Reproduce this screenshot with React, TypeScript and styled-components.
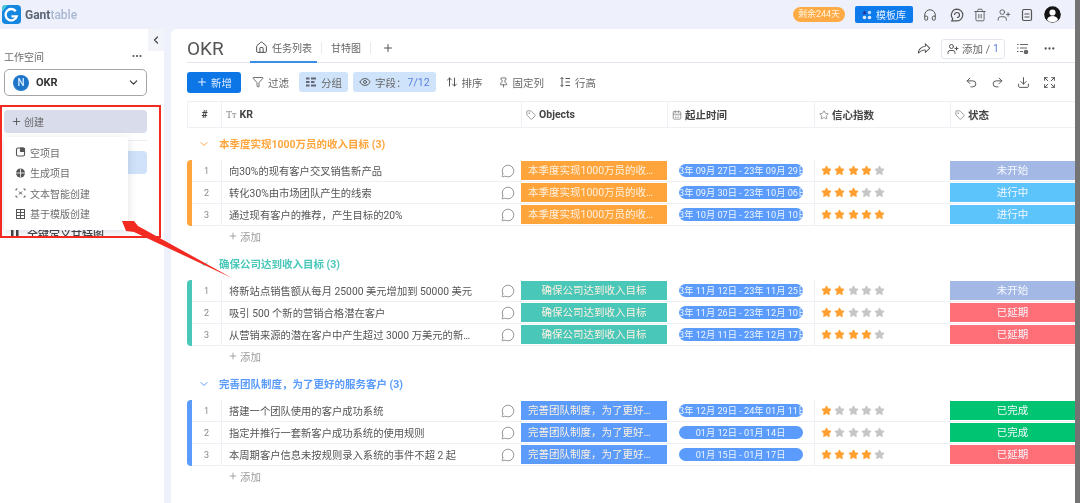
import React from "react";
import styled, { createGlobalStyle } from "styled-components";
import {
  ArrowUpDown, ChevronDown, ChevronLeft, CalendarDays, Download, Ellipsis, Expand, Filter, Headphones,
  House, MessageCircle, Pin, Plus, Redo2, Star, Tag, Trash2, Undo2, UserPlus, Eye,
} from "lucide-react";
import { PiShareFat } from "react-icons/pi";

const CJK = `"Roboto", "Noto Sans CJK SC", sans-serif`;

const Global = createGlobalStyle`
  html, body { margin: 0; padding: 0; background: #fff; }
  body { font-family: ${CJK}; }
  * { box-sizing: border-box; }
`;

const Page = styled.div`
  position: relative;
  width: 1080px;
  height: 503px;
  overflow: hidden;
  display: flex;
  background: #fff;
`;
const Shell = styled.div`
  width: 1075px;
  height: 503px;
  display: flex;
  flex-direction: column;
  background: #eef1fb;
  filter: blur(0.45px);
`;
const Edge = styled.div`
  width: 5px;
  background: #747474;
`;

/* top bar */
const TopBar = styled.header`
  height: 29px;
  flex: none;
  display: flex;
  align-items: center;
  padding: 0 14px 0 2px;
`;
const LogoMark = styled.svg`
  width: 19px;
  height: 19px;
  flex: none;
`;
const LogoText = styled.div`
  margin-left: 4px;
  font: 700 12px "Roboto", sans-serif;
  color: #5b6472;
  span { color: #a9b7d3; font-weight: 500; }
`;
const TopRight = styled.div`
  margin-left: auto;
  display: flex;
  align-items: center;
`;
const Badge = styled.div`
  width: 52px;
  height: 15px;
  border-radius: 8px;
  background: #ffab45;
  color: #fff3df;
  font-size: 9px;
  line-height: 15px;
  text-align: center;
  white-space: nowrap;
`;
const TemplateButton = styled.div`
  margin-left: 10px;
  width: 58px;
  height: 17px;
  border-radius: 2px;
  background: #0d7bec;
  color: #e4f0ff;
  font-size: 10px;
  display: flex;
  align-items: center;
  justify-content: center;
  gap: 4px;
`;
const TopIcons = styled.div`
  display: flex;
  align-items: center;
  gap: 9.5px;
  margin-left: 10px;
  color: #555;
  svg:first-child { margin-right: 3px; }
`;
const Avatar = styled.svg`
  width: 17px;
  height: 17px;
  margin-left: 10px;
`;

/* body */
const Body = styled.div`
  flex: 1;
  min-height: 0;
  display: flex;
  gap: 7px;
`;
const Sidebar = styled.aside`
  position: relative;
  width: 164px;
  flex: none;
  background: #fff;
  padding: 20px 17px 0 4px;
`;
const Collapse = styled.div`
  position: absolute;
  right: 0;
  top: 0;
  width: 16px;
  height: 22px;
  background: #f3f4f9;
  color: #444;
  display: flex;
  align-items: center;
  justify-content: center;
`;
const WorkspaceRow = styled.div`
  height: 14px;
  display: flex;
  align-items: center;
  justify-content: space-between;
  padding-right: 4px;
  font-size: 10px;
  color: #6a6a6a;
`;
const WorkspaceSelect = styled.div`
  margin-top: 6px;
  height: 27px;
  border: 1px solid #a5a5a5;
  border-radius: 5px;
  display: flex;
  align-items: center;
  padding: 0 6px 0 8px;
  font: 700 11px "Roboto", sans-serif;
  color: #333;
`;
const WorkspaceDot = styled.div`
  width: 16px;
  height: 16px;
  border-radius: 50%;
  background: #1f76c9;
  color: #d8ecff;
  font: 500 10px/16px "Roboto", sans-serif;
  text-align: center;
  margin-right: 7px;
`;
const SelectChevron = styled(ChevronDown)`
  margin-left: auto;
`;
const CreateButton = styled.div`
  margin-top: 14px;
  height: 23px;
  border-radius: 4px;
  background: #d9dcea;
  display: flex;
  align-items: center;
  gap: 2px;
  padding-left: 7px;
  font-size: 10px;
  color: #666;
`;
const SideDivider = styled.div`
  margin-top: 7px;
  height: 1px;
  background: #eceef3;
`;
const ProjectList = styled.div`
  margin-top: 10px;
  height: 86px;
  overflow: hidden;
`;
const ProjectItem = styled.div<{ $active?: boolean }>`
  height: ${(p) => (p.$active ? 23 : 24)}px;
  border-radius: 4px;
  background: ${(p) => (p.$active ? "#cfe2fa" : "transparent")};
  display: flex;
  align-items: center;
  gap: 8px;
  padding-left: 7px;
  font-size: 11px;
  font-weight: 500;
  color: #444;
  white-space: nowrap;
`;
const PopMenu = styled.div`
  position: absolute;
  left: 4px;
  top: 108px;
  width: 124px;
  height: 93px;
  padding-top: 5px;
  background: #fff;
  border-radius: 3px;
  box-shadow: 0 2px 10px rgba(40, 50, 80, 0.16);
`;
const PopItem = styled.div`
  height: 20.5px;
  display: flex;
  align-items: center;
  gap: 3px;
  padding-left: 10px;
  font-size: 10px;
  color: #6e6e6e;
  white-space: nowrap;
`;

/* main */
const Main = styled.main`
  flex: 1;
  min-width: 0;
  background: #fff;
  border-radius: 6px 0 0 0;
  padding-left: 16px;
`;
const TabsRow = styled.div`
  height: 34px;
  display: flex;
  align-items: stretch;
  border-bottom: 1px solid #e2e5ee;
`;
const Title = styled.div`
  width: 63px;
  font: 400 19px/39px "Roboto", sans-serif;
  color: #555;
`;
const Tab = styled.div<{ $active?: boolean }>`
  display: flex;
  align-items: center;
  justify-content: center;
  gap: 4px;
  font-size: 10px;
  color: #666;
  width: ${(p) => (p.$active ? "67px" : "auto")};
  padding: ${(p) => (p.$active ? "5px 0 0 0" : "5px 5px 0 9px")};
  margin-bottom: -1px;
  border-bottom: 2px solid ${(p) => (p.$active ? "#3b8ee8" : "transparent")};
`;
const TabSep = styled.div`
  width: 1px;
  height: 12px;
  background: #e8eaf0;
  align-self: center;
  margin: 4px 0 0 4px;
`;
const TabPlus = styled.div`
  display: flex;
  align-items: center;
  padding: 4px 0 0 11px;
  color: #555;
`;
const TabsRight = styled.div`
  margin-left: auto;
  display: flex;
  align-items: center;
  padding: 6px 19px 0 0;
  color: #666;
`;
const AddUser = styled.div`
  width: 64px;
  height: 20px;
  margin: 0 11px 0 10px;
  border: 1px solid #e4e6ee;
  border-radius: 3px;
  display: flex;
  align-items: center;
  justify-content: center;
  gap: 3px;
  font-size: 10.5px;
  color: #666;
  b { font-weight: 400; color: #5a7fe0; }
`;
const ListGear = styled.svg`
  width: 13px;
  height: 13px;
  margin-right: 14px;
`;
const Toolbar = styled.div`
  height: 38px;
  display: flex;
  align-items: center;
  font-size: 10.5px;
  color: #666;
`;
const NewButton = styled.div`
  width: 54px;
  height: 21px;
  border-radius: 3px;
  background: #0c76e6;
  color: #dcecff;
  display: flex;
  align-items: center;
  justify-content: center;
  gap: 3px;
  margin-right: 1px;
`;
const Tool = styled.div<{ $active?: boolean }>`
  height: 20px;
  padding: 0 ${(p) => (p.$active ? 6 : 5)}px;
  display: flex;
  align-items: center;
  gap: 4px;
  border-radius: 3px;
  margin-left: 5px;
  white-space: nowrap;
  background: ${(p) => (p.$active ? "#cfe3fb" : "transparent")};
  b { font-weight: 400; color: #5a7fe0; margin-left: -3px; }
`;
const ToolRight = styled.div`
  margin-left: auto;
  padding-right: 19px;
  display: flex;
  align-items: center;
  gap: 13px;
  color: #555;
`;

/* table */
const columns = "34px 300px 146px 147px 136px 125px";
const HeadRow = styled.div`
  height: 27px;
  display: grid;
  grid-template-columns: ${columns};
  border-top: 1px solid #eef0f5;
  border-bottom: 1px solid #eef0f5;
`;
const HeadCell = styled.div<{ $center?: boolean }>`
  display: flex;
  align-items: center;
  justify-content: ${(p) => (p.$center ? "center" : "flex-start")};
  gap: 3px;
  padding-left: ${(p) => (p.$center ? 0 : 4)}px;
  border-left: 1px solid #eef0f5;
  font-size: 10.5px;
  font-weight: 700;
  color: #444;
  svg { color: #888; }
`;
const TextType = styled.span`
  font: 400 10px "Liberation Serif", serif;
  color: #888;
`;
const Group = styled.section`
  height: 120px;
`;
const GroupTitle = styled.div<{ $color: string }>`
  height: 32px;
  padding: 0 0 1px 11px;
  display: flex;
  align-items: center;
  gap: 9px;
  color: ${(p) => p.$color};
  font-size: 10.5px;
  font-weight: 700;
`;
const Rows = styled.div<{ $color: string }>`
  height: 66px;
  border-left: 5px solid ${(p) => p.$color};
  border-radius: 4px 0 0 4px;
`;
const Row = styled.div`
  height: 22px;
  display: grid;
  grid-template-columns: 29px 300px 146px 147px 136px 125px;
  border-bottom: 1px solid #eef0f5;
`;
const Num = styled.div`
  display: flex;
  align-items: center;
  justify-content: center;
  font: 400 9px "Roboto", sans-serif;
  color: #888;
`;
const KrCell = styled.div`
  display: flex;
  align-items: center;
  padding-left: 7px;
  border-left: 1px solid #eef0f5;
  font-size: 10.3px;
  color: #555;
  svg { color: #777; margin-left: auto; margin-right: 6px; flex: none; }
`;
const KrText = styled.span`
  width: 246px;
  white-space: nowrap;
  overflow: hidden;
  text-overflow: ellipsis;
`;
const ObjectCell = styled.div<{ $color: string }>`
  margin: 1px 0;
  padding: 0 7px;
  background: ${(p) => p.$color};
  color: #fdf0e0;
  font-size: 10.5px;
  line-height: 19px;
  text-align: center;
  white-space: nowrap;
  overflow: hidden;
  text-overflow: ellipsis;
`;
const DateCell = styled.div`
  display: flex;
  align-items: center;
  justify-content: center;
`;
const DatePill = styled.div`
  width: 124px;
  height: 13px;
  border-radius: 7px;
  background: #5a9bfb;
  color: #eef5ff;
  font-size: 9.2px;
  line-height: 13px;
  display: flex;
  justify-content: center;
  overflow: hidden;
  white-space: nowrap;
  span { flex: none; }
`;
const StarCell = styled.div`
  display: flex;
  align-items: center;
  gap: 2.3px;
  padding: 0 0 1px 6px;
  border-left: 1px solid #eef0f5;
`;
const StatusCell = styled.div<{ $color: string }>`
  margin: 1px 0;
  background: ${(p) => p.$color};
  color: #f6f8ff;
  font-size: 10.5px;
  line-height: 19px;
  text-align: center;
`;
const AddRow = styled.div`
  height: 22px;
  display: flex;
  align-items: center;
  gap: 2px;
  padding: 0 0 2px 41px;
  font-size: 10.5px;
  color: #999;
`;

/* annotation */
const RedBox = styled.div`
  position: absolute;
  left: 0;
  top: 105px;
  width: 161px;
  height: 133px;
  border: 2px solid #f32a22;
  pointer-events: none;
`;
const Arrow = styled.svg`
  position: absolute;
  left: 110px;
  top: 210px;
  width: 130px;
  height: 75px;
  pointer-events: none;
`;

const STATUS: Record<string, string> = {
  未开始: "#a3b8e5",
  进行中: "#5cc4fb",
  已延期: "#ff6f77",
  已完成: "#00c472",
};

const groups = [
  {
    title: "本季度实现1000万员的收入目标",
    color: "#ffa53c",
    rows: [
      ["向30%的现有客户交叉销售新产品", "23年 09月 27日 - 23年 09月 29日", 4, "未开始"],
      ["转化30%由市场团队产生的线索", "23年 09月 30日 - 23年 10月 06日", 3, "进行中"],
      ["通过现有客户的推荐，产生目标的20%", "23年 10月 07日 - 23年 10月 10日", 5, "进行中"],
    ],
  },
  {
    title: "确保公司达到收入目标",
    color: "#49c7b9",
    rows: [
      ["将新站点销售额从每月 25000 美元增加到 50000 美元", "23年 11月 12日 - 23年 11月 25日", 2, "未开始"],
      ["吸引 500 个新的营销合格潜在客户", "23年 11月 26日 - 23年 12月 10日", 2, "已延期"],
      ["从营销来源的潜在客户中产生超过 3000 万美元的新产品收入", "23年 12月 11日 - 23年 12月 17日", 4, "已延期"],
    ],
  },
  {
    title: "完善团队制度，为了更好的服务客户",
    color: "#5a9bfb",
    rows: [
      ["搭建一个团队使用的客户成功系统", "23年 12月 29日 - 24年 01月 11日", 1, "已完成"],
      ["指定并推行一套新客户成功系统的使用规则", "01月 12日 - 01月 14日", 1, "已完成"],
      ["本周期客户信息未按规则录入系统的事件不超 2 起", "01月 15日 - 01月 17日", 4, "已延期"],
    ],
  },
] as const;

const StarIcon = ({ on }: { on: boolean }) => (
  <Star size={11} fill={on ? "#ff9f2f" : "#c6c6c6"} color={on ? "#ff9f2f" : "#c6c6c6"} strokeWidth={1.5} />
);

const BarsIcon = () => (
  <svg width="12" height="12" viewBox="0 0 12 12" fill="#667">
    <rect x="1" y="1.5" width="3.5" height="2" /><rect x="6" y="1.5" width="5" height="2" />
    <rect x="1" y="5" width="3.5" height="2" /><rect x="6" y="5" width="3.5" height="2" />
    <rect x="1" y="8.5" width="3.5" height="2" /><rect x="6" y="8.5" width="5" height="2" />
  </svg>
);
const RowHeightIcon = () => (
  <svg width="12" height="12" viewBox="0 0 12 12" fill="none" stroke="#555" strokeWidth="1">
    <path d="M3 1.5v9M1.5 3 3 1.5 4.5 3M1.5 9 3 10.5 4.5 9M6.5 2.5H11M6.5 6H11M6.5 9.5H11" />
  </svg>
);
const MenuBlank = () => (
  <svg width="13" height="12" viewBox="0 0 13 12" fill="none" stroke="#555" strokeWidth="1.1">
    <rect x="2.5" y="2" width="8" height="8" rx="1.5" />
    <path d="M6.5 2v3.500h4v-2a1.500 1.500 0 0 0-1.500-1.500z" fill="#555" />
  </svg>
);
const MenuGen = () => (
  <svg width="13" height="12" viewBox="0 0 13 12" fill="#555">
    <circle cx="6.5" cy="6" r="4.5" />
    <path d="M2 6h9M6.5 2v8" stroke="#fff" strokeWidth="0.8" />
  </svg>
);
const MenuText = () => (
  <svg width="13" height="12" viewBox="0 0 13 12" fill="none" stroke="#555" strokeWidth="1">
    <path d="M2 3.500V2h1.500M9.500 2H11v1.500M11 8.500V10H9.500M3.500 10H2V8.500M5 4.500l3 3M8 4.500l-3 3" />
  </svg>
);
const MenuTemplate = () => (
  <svg width="13" height="12" viewBox="0 0 13 12" fill="none" stroke="#555" strokeWidth="1">
    <rect x="2.5" y="1.5" width="8" height="9" />
    <path d="M2.500 4.500h8M2.500 7.500h8M6.500 1.500v9" />
  </svg>
);

export default function App() {
  return (
    <Page>
      <Global />
      <Shell>
        <TopBar>
          <LogoMark viewBox="0 0 20 20">
            <rect width="20" height="20" rx="4" fill="#1587e0" />
            <path d="M0 4a4 4 0 0 1 4-4h2L0 7z" fill="#4cc9dc" />
            <path d="M14.500 6.500A6 6 0 1 0 15.500 12H10" fill="none" stroke="#fff" strokeWidth="2.4" />
          </LogoMark>
          <LogoText>Gant<span>table</span></LogoText>
          <TopRight>
            <Badge>剩余244天</Badge>
            <TemplateButton>
              <svg width="10" height="10" viewBox="0 0 10 10">
                <path d="M2.500 0.500 4.500 4H0.500z" fill="#2a2e8f" />
                <circle cx="7.5" cy="2.5" r="1.7" fill="#bcd9ff" />
                <circle cx="2.5" cy="7.5" r="1.8" fill="#dfeaff" />
                <circle cx="7.5" cy="7.5" r="1.8" fill="#dfeaff" />
              </svg>
              模板库
            </TemplateButton>
            <TopIcons>
              <Headphones size={14} strokeWidth={1.7} />
              <svg width="14" height="14" viewBox="0 0 14 14" fill="none" stroke="#555" strokeWidth="1.2">
                <path d="M7 1.200a5.800 5.800 0 0 1 0 11.600H1.800l1-2A5.800 5.800 0 0 1 7 1.200z" />
                <path d="M4.500 7a2.500 2.500 0 1 1 2.500 2.500" />
              </svg>
              <Trash2 size={14} strokeWidth={1.5} />
              <UserPlus size={14} strokeWidth={1.5} />
              <svg width="14" height="14" viewBox="0 0 14 14" fill="none" stroke="#555" strokeWidth="1.2">
                <rect x="2.5" y="1.5" width="9" height="11" rx="1.5" />
                <path d="M4.500 6h5M4.500 9h5" />
              </svg>
            </TopIcons>
            <Avatar viewBox="0 0 17 17">
              <circle cx="8.5" cy="8.5" r="8.3" fill="#141414" />
              <circle cx="8.5" cy="6.5" r="3.1" fill="#fff" />
              <path d="M3 14c.6-3 2.800-4 5.500-4s4.900 1 5.500 4a8 8 0 0 1-11 0z" fill="#fff" />
            </Avatar>
          </TopRight>
        </TopBar>
        <Body>
          <Sidebar>
            <Collapse><ChevronLeft size={12} strokeWidth={2.4} /></Collapse>
            <WorkspaceRow>
              工作空间
              <Ellipsis size={12} color="#555" strokeWidth={2.4} />
            </WorkspaceRow>
            <WorkspaceSelect>
              <WorkspaceDot>N</WorkspaceDot>
              OKR
              <SelectChevron size={13} strokeWidth={2} />
            </WorkspaceSelect>
            <CreateButton><Plus size={11} color="#555" />创建</CreateButton>
            <SideDivider />
            <ProjectList>
              <ProjectItem $active>OKR</ProjectItem>
              <ProjectItem>项目计划</ProjectItem>
              <ProjectItem>任务管理</ProjectItem>
              <ProjectItem>
                <svg width="8" height="10" viewBox="0 0 8 10" fill="#444"><rect width="2.5" height="10" /><rect x="5" width="2.5" height="10" /></svg>
                全键定义甘特图
              </ProjectItem>
            </ProjectList>
            <PopMenu>
              <PopItem><MenuBlank />空项目</PopItem>
              <PopItem><MenuGen />生成项目</PopItem>
              <PopItem><MenuText />文本智能创建</PopItem>
              <PopItem><MenuTemplate />基于模版创建</PopItem>
            </PopMenu>
          </Sidebar>
          <Main>
            <TabsRow>
              <Title>OKR</Title>
              <Tab $active><House size={13} strokeWidth={1.7} color="#444" />任务列表</Tab>
              <TabSep />
              <Tab>甘特图</Tab>
              <TabSep />
              <TabPlus><Plus size={12} /></TabPlus>
              <TabsRight>
                <PiShareFat size={14} color="#444" />
                <AddUser><UserPlus size={12} color="#555" />添加 / <b>1</b></AddUser>
                <ListGear viewBox="0 0 13 13" fill="none" stroke="#666" strokeWidth="1">
                  <path d="M1 2.500h1.500M4 2.500h8M1 6h1.500M4 6h7M1 9.500h1.500M4 9.500h3" />
                  <circle cx="10" cy="10" r="2.3" fill="#666" stroke="none" />
                </ListGear>
                <Ellipsis size={13} strokeWidth={2.2} color="#555" />
              </TabsRight>
            </TabsRow>
            <Toolbar>
              <NewButton><Plus size={12} strokeWidth={2.2} />新增</NewButton>
              <Tool><Filter size={12} color="#555" strokeWidth={1.7} />过滤</Tool>
              <Tool $active><BarsIcon />分组</Tool>
              <Tool $active><Eye size={12} color="#555" strokeWidth={1.9} />字段：<b>7/12</b></Tool>
              <Tool><ArrowUpDown size={12} color="#444" strokeWidth={1.8} />排序</Tool>
              <Tool><Pin size={11} color="#555" strokeWidth={1.7} />固定列</Tool>
              <Tool><RowHeightIcon />行高</Tool>
              <ToolRight>
                <Undo2 size={13} strokeWidth={1.8} />
                <Redo2 size={13} strokeWidth={1.8} />
                <Download size={13} strokeWidth={1.8} />
                <Expand size={13} strokeWidth={1.8} />
              </ToolRight>
            </Toolbar>
            <HeadRow>
              <HeadCell $center>#</HeadCell>
              <HeadCell><TextType>Tт</TextType>KR</HeadCell>
              <HeadCell><Tag size={10} />Objects</HeadCell>
              <HeadCell><CalendarDays size={10} />起止时间</HeadCell>
              <HeadCell><Star size={10} />信心指数</HeadCell>
              <HeadCell><Tag size={10} />状态</HeadCell>
            </HeadRow>
            {groups.map((g) => (
              <Group key={g.title}>
                <GroupTitle $color={g.color}>
                  <ChevronDown size={12} strokeWidth={2} />
                  <span>{g.title} (3)</span>
                </GroupTitle>
                <Rows $color={g.color}>
                  {g.rows.map((r, i) => (
                    <Row key={i}>
                      <Num>{i + 1}</Num>
                      <KrCell>
                        <KrText>{r[0]}</KrText>
                        <MessageCircle size={14} strokeWidth={1.3} />
                      </KrCell>
                      <ObjectCell $color={g.color}>{g.title}</ObjectCell>
                      <DateCell><DatePill><span>{r[1]}</span></DatePill></DateCell>
                      <StarCell>
                        {[0, 1, 2, 3, 4].map((n) => <StarIcon key={n} on={n < (r[2] as number)} />)}
                      </StarCell>
                      <StatusCell $color={STATUS[r[3] as string]}>{r[3]}</StatusCell>
                    </Row>
                  ))}
                </Rows>
                <AddRow><Plus size={10} />添加</AddRow>
              </Group>
            ))}
          </Main>
        </Body>
      </Shell>
      <Edge />
      <RedBox />
      <Arrow viewBox="110 210 130 75">
        <polygon points="122,221 134,221 138,226 232,278 134,232 126,231" fill="#f32a22" />
      </Arrow>
    </Page>
  );
}
